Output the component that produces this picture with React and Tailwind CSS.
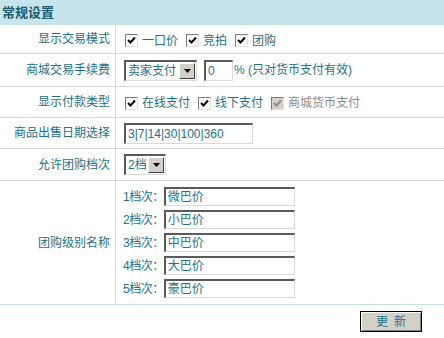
const teal = 'text-[#23708a]';

function Check({ label, disabled }) {
  return (
    <label className={`flex items-center gap-[4px] mr-[8px] ${disabled ? 'text-[#8a8a8a]' : teal}`}>
      <span
        className={`w-[13px] h-[13px] flex items-center justify-center border-t border-l border-[#7a7a7a] border-b border-r border-b-[#e0e0e0] border-r-[#e0e0e0] ${
          disabled ? 'bg-[#d4d0c8]' : 'bg-white'
        }`}
      >
        <svg width="9" height="9" viewBox="0 0 9 9">
          <path
            d="M1 4 L3.5 6.5 L8 1.5"
            fill="none"
            stroke={disabled ? '#8a8a8a' : '#000'}
            strokeWidth="2"
          />
        </svg>
      </span>
      <span>{label}</span>
    </label>
  );
}

function Inset({ className = '', children }) {
  return (
    <div
      className={`flex items-center whitespace-nowrap bg-white border-t-2 border-l-2 border-t-[#5a5a5a] border-l-[#5a5a5a] border-b border-r border-b-[#d8d8d8] border-r-[#d8d8d8] text-[#23708a] ${className}`}
    >
      {children}
    </div>
  );
}

function Select({ value, className }) {
  return (
    <Inset className={`pl-[2px] pr-[1px] ${className}`}>
      <span className="flex-1">{value}</span>
      <span className="w-[16px] h-[16px] shrink-0 bg-[#d4d0c8] border border-t-white border-l-white border-b-[#404040] border-r-[#404040] flex items-center justify-center">
        <svg width="7" height="4" viewBox="0 0 7 4">
          <path d="M0 0 L7 0 L3.5 4 Z" fill="#000" />
        </svg>
      </span>
    </Inset>
  );
}

function Label({ children }) {
  return (
    <div className={`w-[116px] shrink-0 border-r border-[#d3d8dc] flex items-center justify-end pr-[5px] ${teal}`}>
      {children}
    </div>
  );
}

export default function App() {
  const levels = ['微巴价', '小巴价', '中巴价', '大巴价', '豪巴价'];
  return (
    <div
      className="w-[444px] h-[338px] bg-white text-[12px] leading-none"
      style={{ fontFamily: '"Liberation Sans", "Noto Sans CJK SC", sans-serif' }}
    >
      <div className="h-[25px] bg-[#c5e4eb] flex items-center pl-[2px] font-bold text-[13px] text-[#1b5c6e]">
        常规设置
      </div>
      <div className="h-[29px] flex border-b border-[#d3d8dc]">
        <Label>显示交易模式</Label>
        <div className="flex-1 flex items-center pl-[9px] pt-[3px]">
          <Check label="一口价" />
          <Check label="竞拍" />
          <Check label="团购" />
        </div>
      </div>
      <div className="h-[33px] flex border-b border-[#d3d8dc]">
        <Label>商城交易手续费</Label>
        <div className="flex-1 flex items-center pl-[8px]">
          <Select value="卖家支付" className="w-[73px] h-[21px]" />
          <Inset className="w-[29px] h-[21px] ml-[7px] pl-[2px]">0</Inset>
          <span className={`${teal} ml-[1px]`}>% (只对货币支付有效)</span>
        </div>
      </div>
      <div className="h-[31px] flex border-b border-[#d3d8dc]">
        <Label>显示付款类型</Label>
        <div className="flex-1 flex items-center pl-[9px] pt-[2px]">
          <Check label="在线支付" />
          <Check label="线下支付" />
          <Check label="商城货币支付" disabled />
        </div>
      </div>
      <div className="h-[31px] flex border-b border-[#d3d8dc]">
        <Label>商品出售日期选择</Label>
        <div className="flex-1 flex items-center pl-[8px]">
          <Inset className="w-[129px] h-[21px] pl-[2px]">3|7|14|30|100|360</Inset>
        </div>
      </div>
      <div className="h-[32px] flex border-b border-[#d3d8dc]">
        <Label>允许团购档次</Label>
        <div className="flex-1 flex items-center pl-[8px]">
          <Select value="2档" className="w-[42px] h-[21px]" />
        </div>
      </div>
      <div className="h-[124px] flex border-b border-[#c5e0e8]">
        <Label>团购级别名称</Label>
        <div className="flex-1 flex flex-col justify-center gap-[4px] pl-[7px]">
          {levels.map((v, i) => (
            <div key={v} className="flex items-center">
              <span className={`shrink-0 whitespace-nowrap tracking-[-0.5px] ${teal}`}>{i + 1}档次：</span>
              <Inset className="w-[131px] h-[19px] pl-[2px]">{v}</Inset>
            </div>
          ))}
        </div>
      </div>
      <div className="flex justify-end pr-[22px] pt-[6px]">
        <button className="w-[62px] h-[21px] bg-[#d4d0c8] border border-black shadow-[inset_1px_1px_0_#fff,inset_-1px_-1px_0_#808080] text-[#23708a] tracking-[6px] pl-[6px]">
          更新
        </button>
      </div>
    </div>
  );
}
